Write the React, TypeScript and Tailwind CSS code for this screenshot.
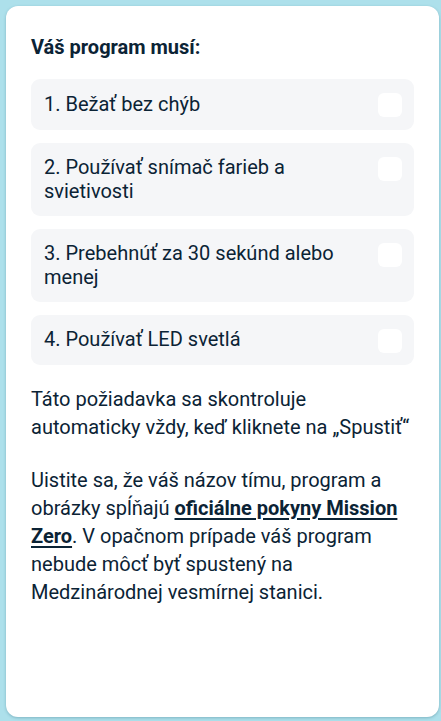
const items = [
  "1. Bežať bez chýb",
  "2. Používať snímač farieb a svietivosti",
  "3. Prebehnúť za 30 sekúnd alebo menej",
  "4. Používať LED svetlá",
];

export default function App() {
  return (
    <div
      className="flex h-[721px] w-[441px] bg-[#ade0eb] pb-[4px] pl-[6px] pr-[2px] pt-[6px] text-[#0b2335]"
      style={{ fontFamily: "Roboto, 'Noto Sans', sans-serif" }}
    >
      <div className="flex-1 rounded-[12px] bg-white px-[25px] pt-[29px] shadow-[0_1px_3px_rgba(40,100,120,0.35)]">
        <h2 className="text-[20px] font-bold leading-[24px]">Váš program musí:</h2>
        <ul className="mt-[20px] flex flex-col gap-[13px]">
          {items.map((t) => (
            <li
              key={t}
              className="flex items-start justify-between gap-4 rounded-[9px] bg-[#f5f6f8] py-[12.5px] pl-[13px] pr-[12px]"
            >
              <span className="text-[20px] leading-[24px]">{t}</span>
              <span className="mt-[1.5px] h-[24px] w-[24px] shrink-0 rounded-[6px] bg-white" />
            </li>
          ))}
        </ul>
        <p className="mt-[20px] text-[20px] leading-[28px]">
          Táto požiadavka sa skontroluje automaticky vždy, keď kliknete na „Spustiť“
        </p>
        <p className="mt-[25px] text-[20px] leading-[28px]">
          Uistite sa, že váš názov tímu, program a obrázky spĺňajú{" "}
          <a href="#" className="font-bold underline decoration-2 underline-offset-[3px]">
            oficiálne pokyny Mission Zero
          </a>
          . V opačnom prípade váš program nebude môcť byť spustený na Medzinárodnej
          vesmírnej stanici.
        </p>
      </div>
    </div>
  );
}
